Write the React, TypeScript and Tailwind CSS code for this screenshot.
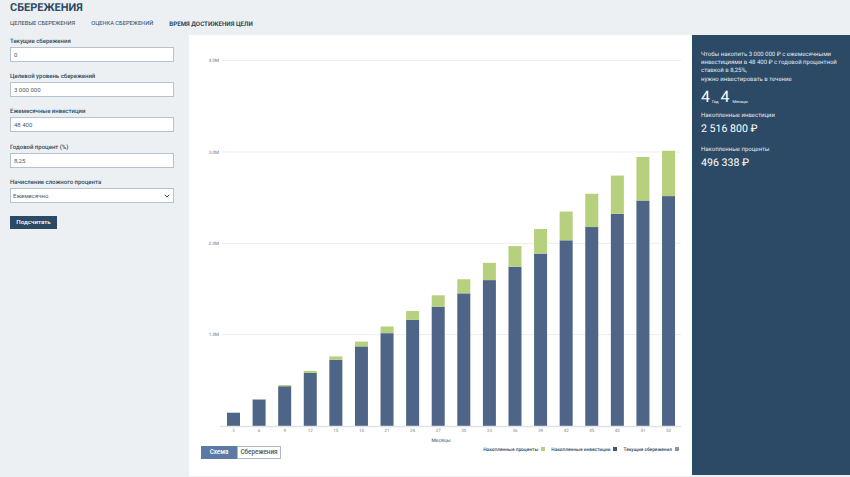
import { ChevronDown } from 'lucide-react';

const MONTHS = [3, 6, 9, 12, 15, 18, 21, 24, 27, 30, 33, 36, 39, 42, 45, 48, 51, 52];
const MONTHLY = 48400;
const RATE = 0.0825 / 12;

const BASE_Y = 426;
const PX_PER_M = 91.35;
const CHART_TOP = 35;

function balance(m: number) {
  return (MONTHLY * (Math.pow(1 + RATE, m) - 1)) / RATE;
}

function Field({ label, value }: { label: string; value: string }) {
  return (
    <div className="flex flex-col">
      <label className="text-[6px] leading-[10px] font-medium text-[#2c4a64]">{label}</label>
      <input
        readOnly
        value={value}
        className="block h-[15px] w-full border border-[#b4c3cf] bg-white px-[3px] text-[6px] text-[#4a5a68] outline-none"
      />
    </div>
  );
}

function Chart() {
  const xs = MONTHS.map((_, i) => 233.5 + i * 25.59 - 189);
  return (
    <svg width={503} height={411} className="block">
      {[1, 2, 3, 4].map((v) => {
        const y = BASE_Y - CHART_TOP - v * PX_PER_M;
        return (
          <g key={v}>
            <line x1={33} x2={492} y1={y} y2={y} stroke="#ededed" strokeWidth={1} />
            <text x={30} y={y + 1.8} textAnchor="end" fontSize={4.5} fill="#6a7680">
              {v}.0M
            </text>
          </g>
        );
      })}
      {MONTHS.map((m, i) => {
        const invested = m * MONTHLY;
        const total = balance(m);
        const h1 = (invested / 1e6) * PX_PER_M;
        const h2 = ((total - invested) / 1e6) * PX_PER_M;
        const base = BASE_Y - CHART_TOP;
        return (
          <g key={m}>
            <rect x={xs[i] - 6.5} y={base - h1} width={13} height={h1} fill="#4e6587" />
            <rect x={xs[i] - 6.5} y={base - h1 - h2} width={13} height={h2} fill="#b6d07e" />
            <text x={xs[i]} y={BASE_Y - CHART_TOP + 6} textAnchor="middle" fontSize={4.5} fill="#7a858d">
              {m}
            </text>
          </g>
        );
      })}
      <line x1={31} x2={492} y1={BASE_Y - CHART_TOP + 0.5} y2={BASE_Y - CHART_TOP + 0.5} stroke="#e2e2e2" strokeWidth={1.5} />
      <text x={252} y={BASE_Y - CHART_TOP + 16} textAnchor="middle" fontSize={5} fill="#44586a">
        Месяцы
      </text>
    </svg>
  );
}

function LegendItem({ label, color }: { label: string; color: string }) {
  return (
    <div className="flex items-center gap-[3px]">
      <span>{label}</span>
      <span className={`mb-[2px] h-[4px] w-[4px] ${color}`} />
    </div>
  );
}

export default function App() {
  return (
    <div className="flex h-[477px] w-[850px] flex-col overflow-hidden bg-[#ecf0f2] font-['Roboto',sans-serif] text-[#2c4a64] [text-rendering:geometricPrecision]">
      <div className="h-[35px] shrink-0 pl-[10px]">
        <h1 className="text-[11px] leading-[15px] font-bold">СБЕРЕЖЕНИЯ</h1>
        <div className="mt-[4px] flex items-center gap-[16px] text-[5.7px] leading-[10px]">
          <span>ЦЕЛЕВЫЕ СБЕРЕЖЕНИЯ</span>
          <span>ОЦЕНКА СБЕРЕЖЕНИЙ</span>
          <span className="text-[6.2px] font-bold">ВРЕМЯ ДОСТИЖЕНИЯ ЦЕЛИ</span>
        </div>
      </div>

      <div className="flex h-[441px] min-h-0">
        <aside className="flex w-[189px] shrink-0 flex-col pt-[1.5px] pr-[15px] pl-[10px]">
          <div className="flex flex-col gap-[10.4px]">
            <Field label="Текущие сбережения" value="0" />
            <Field label="Целевой уровень сбережений" value="3 000 000" />
            <Field label="Ежемесячные инвестиции" value="48 400" />
            <Field label="Годовой процент (%)" value="8,25" />
            <div className="flex flex-col">
              <label className="text-[6px] leading-[10px] font-medium">Начисление сложного процента</label>
              <div className="relative">
                <select className="block h-[15px] w-full appearance-none border border-[#b4c3cf] bg-white pl-[2px] text-[6px] text-[#4a5a68] outline-none">
                  <option>Ежемесячно</option>
                </select>
                <ChevronDown size={8} strokeWidth={3} className="absolute top-[3.5px] right-[3px] text-[#2c4a64]" />
              </div>
            </div>
          </div>
          <button className="mt-[13px] h-[13px] w-[47px] bg-[#2c4a66] text-[6.2px] leading-[13px] font-medium text-white">
            Подсчитать
          </button>
        </aside>

        <main className="flex w-[503px] shrink-0 flex-col bg-white">
          <Chart />
          <div className="flex items-start justify-between pr-[13px] pl-[12px]">
            <div className="flex text-[6.3px] font-medium">
              <button className="h-[13px] w-[36px] bg-[#5b7ba6] leading-[13px] text-white">Схема</button>
              <button className="h-[13px] w-[44px] border border-[#a9bad0] bg-white leading-[11px] text-[#44586a]">Сбережения</button>
            </div>
            <div className="flex gap-[6px] pt-[1px] text-[4.8px] leading-[5px] font-medium">
              <LegendItem label="Накопленные проценты" color="bg-[#b6d07e]" />
              <LegendItem label="Накопленные инвестиции" color="bg-[#3f5675]" />
              <LegendItem label="Текущие сбережения" color="bg-[#8a97a8]" />
            </div>
          </div>
        </main>

        <aside className="mb-[1px] flex-1 whitespace-nowrap bg-[#2c4a66] pt-[16px] pl-[9px] text-white">
          <p className="text-[6px] leading-[8.2px] text-[#e3e9ee]">
            Чтобы накопить 3 000 000 ₽ с ежемесячными
            <br />
            инвестициями в 48 400 ₽ с годовой процентной
            <br />
            ставкой в 8,25%,
            <br />
            нужно инвестировать в течение
          </p>
          <div className="mt-[3px] flex items-end">
            <span className="text-[16px] leading-[20px]">4</span>
            <span className="mx-[2px] mb-[2px] text-[4px] leading-[6px]">Год</span>
            <span className="text-[16px] leading-[20px]">4</span>
            <span className="mb-[2px] ml-[3px] text-[4px] leading-[6px]">Месяцы</span>
          </div>
          <div className="mt-[4px] text-[6px] leading-[10px] text-[#e3e9ee]">Накопленные инвестиции</div>
          <div className="mt-[1px] text-[10.6px] leading-[14px]">2 516 800 ₽</div>
          <div className="mt-[9px] text-[6px] leading-[10px] text-[#e3e9ee]">Накопленные проценты</div>
          <div className="mt-[1px] text-[10.6px] leading-[14px]">496 338 ₽</div>
        </aside>
      </div>
    </div>
  );
}
